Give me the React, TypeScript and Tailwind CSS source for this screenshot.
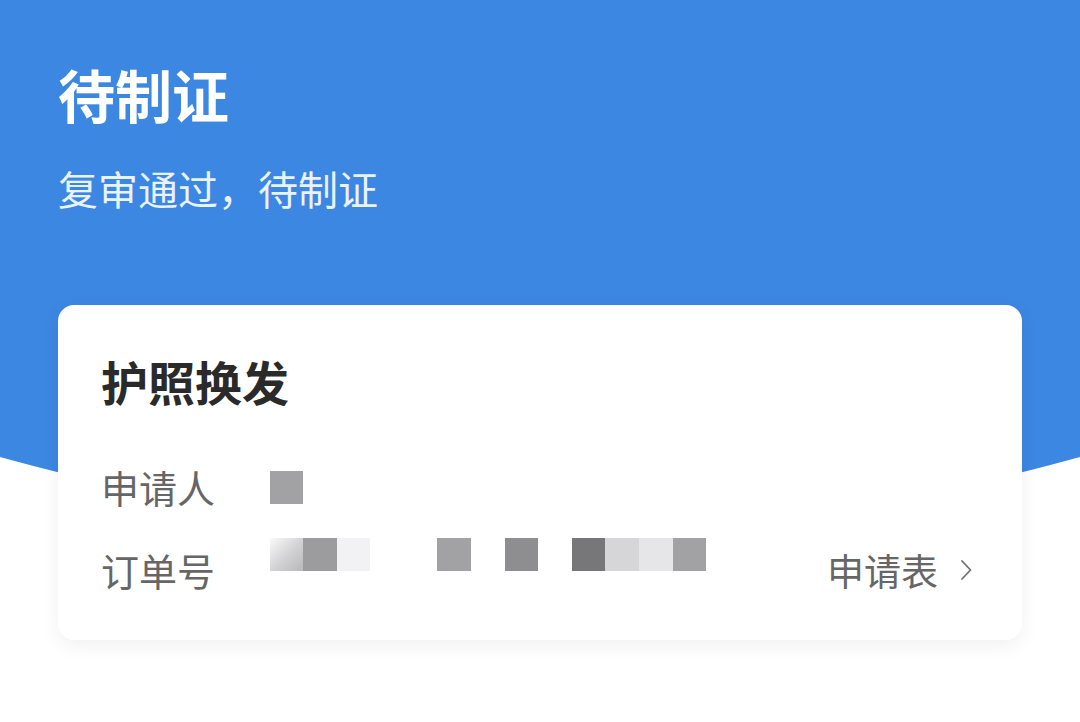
import React from "react";

const cjk = { fontFamily: '"Noto Sans CJK SC", "Noto Sans", sans-serif' };

// pixelated order number, one entry per 33px cell ("" = blank)
const orderCells = [
  "grad",
  "bg-[#9c9c9e]",
  "bg-[#f2f2f4]",
  "",
  "",
  "bg-[#a2a2a4]",
  "",
  "bg-[#8e8e90]",
  "",
  "bg-[#77777a]",
  "bg-[#d6d6d8]",
  "bg-[#e6e6e8]",
  "bg-[#a2a2a4]",
];

const Chevron = () => (
  <svg width="12" height="24" viewBox="0 0 12 24" fill="none">
    <polyline
      points="2,3 10.5,12 2,21"
      stroke="#707070"
      strokeWidth="1.8"
      strokeLinecap="round"
      strokeLinejoin="round"
    />
  </svg>
);

export default function App() {
  return (
    <div className="w-full h-[722px] bg-white overflow-hidden" style={cjk}>
      {/* Blue header */}
      <div className="bg-[#3c87e2] h-[457px] pl-[58px] pt-[58px] text-white">
        <h1 className="text-[57px] leading-[70px] font-bold">待制证</h1>
        <p className="mt-[36px] text-[40px] leading-[48px] text-[#eaf2fc]">复审通过，待制证</p>
      </div>
      <svg className="block" width="1080" height="75" viewBox="0 0 1080 75">
        <path d="M0 0 H1080 Q540 150 0 0 Z" fill="#3c87e2" />
      </svg>

      {/* Card */}
      <div className="-mt-[227px] px-[58px]">
        <div className="relative bg-white rounded-[16px] shadow-[0_6px_20px_rgba(0,0,0,0.06)] pl-[43px] pr-[50px] pt-[48px] pb-[46px]">
          <h2 className="text-[47px] leading-[56px] font-bold text-[#2a2a2a]">护照换发</h2>

          <div className="mt-[54px] flex items-center h-[48px]">
            <span className="w-[169px] text-[38px] leading-[48px] text-[#666666]">申请人</span>
            <span className="w-[33px] h-[33px] bg-[#a2a2a4]" />
          </div>

          <div className="mt-[27px] flex items-start">
            <span className="w-[169px] mt-[8px] text-[38px] leading-[48px] text-[#666666]">订单号</span>
            <div className="flex">
              {orderCells.map((c, i) =>
                c === "grad" ? (
                  <span
                    key={i}
                    className="w-[33px] h-[33px] bg-gradient-to-br from-[#fafafa] via-[#d4d4d6] to-[#b8b8ba]"
                  />
                ) : (
                  <span key={i} className={`w-[33.6px] h-[33px] ${c}`} />
                )
              )}
            </div>
            <div className="ml-auto mt-[8px] flex items-center gap-[22px] h-[48px]">
              <span className="text-[37px] leading-[48px] text-[#666666]">申请表</span>
              <Chevron />
            </div>
          </div>
        </div>
      </div>
    </div>
  );
}
